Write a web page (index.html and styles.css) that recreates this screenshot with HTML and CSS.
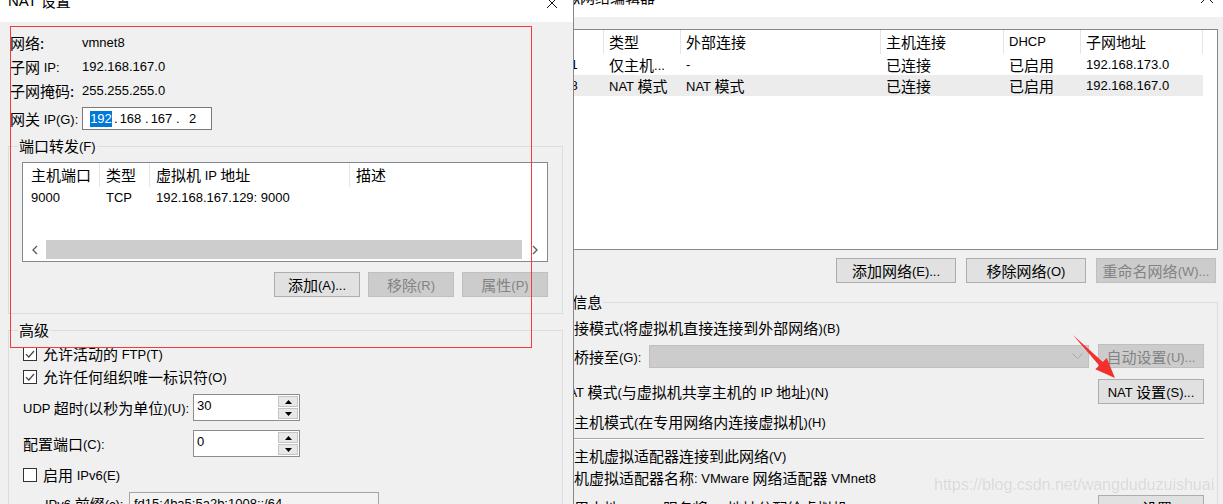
FILE: index.html
```html
<!DOCTYPE html>
<html lang="zh-CN">
<head>
<meta charset="utf-8">
<title>NAT 设置</title>
<link rel="stylesheet" href="styles.css">
</head>
<body>
<div class="desk">

  <!-- background window: virtual network editor -->
  <div class="win editor">
    <div class="titlebar tb-small">
      <span class="wtitle">虚拟网络编辑器</span>
      <svg class="wclose" width="14" height="14" viewBox="0 0 14 14"><path d="M1 1L13 13M13 1L1 13" stroke="#111" stroke-width="1" fill="none"/></svg>
    </div>
    <div class="ed-body">
      <div class="netlist">
        <div class="erow ehead">
          <div class="e1">名称</div><div class="e2">类型</div><div class="e3">外部连接</div><div class="e4">主机连接</div><div class="e5 en">DHCP</div><div class="e6">子网地址</div>
        </div>
        <div class="erow">
          <div class="e1 en">VMnet1</div><div class="e2">仅主机<span class="en">...</span></div><div class="e3 en">-</div><div class="e4">已连接</div><div class="e5">已启用</div><div class="e6 en">192.168.173.0</div>
        </div>
        <div class="erow cur">
          <div class="e1 en">VMnet8</div><div class="e2"><span class="en">NAT </span>模式</div><div class="e3"><span class="en">NAT </span>模式</div><div class="e4">已连接</div><div class="e5">已启用</div><div class="e6 en">192.168.167.0</div>
        </div>
      </div>

      <div class="ebtns">
        <button class="btn wide">添加网络<span class="en">(E)...</span></button>
        <button class="btn wide">移除网络<span class="en">(O)</span></button>
        <button class="btn wide off">重命名网络<span class="en">(W)...</span></button>
      </div>

      <div class="group info">
        <div class="gtitle"><span class="en">VMnet </span>信息</div>
        <div class="orow r-bridge"><span class="radio"></span><span>桥接模式<span class="en">(</span>将虚拟机直接连接到外部网络<span class="en">)(B)</span></span></div>
        <div class="orow r-to">
          <span class="lab">已桥接至<span class="en">(G):</span></span>
          <div class="combo"><svg width="11" height="6" viewBox="0 0 11 6"><path d="M0.5 0.5L5.5 5.5L10.5 0.5" stroke="#a8a8a8" fill="none"/></svg></div>
          <button class="btn side off">自动设置<span class="en">(U)...</span></button>
        </div>
        <div class="orow r-nat"><span class="radio on"></span><span><span class="en">NAT </span>模式<span class="en">(</span>与虚拟机共享主机的<span class="en"> IP </span>地址<span class="en">)(N)</span></span><button class="btn side"><span class="en">NAT </span>设置<span class="en">(S)...</span></button></div>
        <div class="orow r-host"><span class="radio"></span><span>仅主机模式<span class="en">(</span>在专用网络内连接虚拟机<span class="en">)(H)</span></span></div>
        <div class="hsep"></div>
        <div class="orow r-adp"><span class="check"><svg width="12" height="12" viewBox="0 0 12 12"><path d="M2 6.2L4.8 9L10 3" stroke="#333" stroke-width="1.3" fill="none"/></svg></span><span>将主机虚拟适配器连接到此网络<span class="en">(V)</span></span></div>
        <div class="orow r-name"><span>主机虚拟适配器名称<span class="en">: VMware </span>网络适配器<span class="en"> VMnet8</span></span></div>
        <div class="orow r-dhcp"><span class="check"><svg width="12" height="12" viewBox="0 0 12 12"><path d="M2 6.2L4.8 9L10 3" stroke="#333" stroke-width="1.3" fill="none"/></svg></span><span>使用本地<span class="en"> DHCP </span>服务将<span class="en"> IP </span>地址分配给虚拟机<span class="en">(D)</span></span><button class="btn side"><span class="en">DHCP </span>设置<span class="en">(P)...</span></button></div>
      </div>
    </div>
  </div>

  <!-- foreground dialog -->
  <div class="win nat">
    <div class="titlebar">
      <span class="wtitle"><span class="en">NAT </span>设置</span>
      <svg class="wclose" width="12" height="12" viewBox="0 0 12 12"><path d="M1 1L11 11M11 1L1 11" stroke="#111" stroke-width="1" fill="none"/></svg>
    </div>
    <div class="nat-body">
      <div class="kv"><span class="k">网络:</span><span class="en">vmnet8</span></div>
      <div class="kv"><span class="k">子网<span class="en"> IP:</span></span><span class="en">192.168.167.0</span></div>
      <div class="kv"><span class="k">子网掩码:</span><span class="en">255.255.255.0</span></div>
      <div class="kv gw">
        <span class="k">网关<span class="en"> IP(G):</span></span>
        <div class="ipbox en">
          <span class="oct first"><span class="sel">192</span></span><span class="dot">.</span><span class="oct">168</span><span class="dot">.</span><span class="oct">167</span><span class="dot">.</span><span class="oct">2</span>
        </div>
      </div>

      <div class="group ports">
        <div class="gtitle">端口转发<span class="en">(F)</span></div>
        <div class="plist">
          <div class="prow phead">
            <div class="p1">主机端口</div><div class="p2">类型</div><div class="p3">虚拟机<span class="en"> IP </span>地址</div><div class="p4">描述</div>
          </div>
          <div class="prow en">
            <div class="p1">9000</div><div class="p2">TCP</div><div class="p3">192.168.167.129: 9000</div><div class="p4"></div>
          </div>
          <div class="pfill"></div>
          <div class="hscroll">
            <div class="harrow la"><svg width="6" height="10" viewBox="0 0 6 10"><path d="M5 1L1 5L5 9" stroke="#606060" stroke-width="1.4" fill="none"/></svg></div>
            <div class="hthumb"></div>
            <div class="harrow ra"><svg width="6" height="10" viewBox="0 0 6 10"><path d="M1 1L5 5L1 9" stroke="#606060" stroke-width="1.4" fill="none"/></svg></div>
          </div>
        </div>
        <div class="pbtns">
          <button class="btn">添加<span class="en">(A)...</span></button>
          <button class="btn off">移除<span class="en">(R)</span></button>
          <button class="btn off">属性<span class="en">(P)</span></button>
        </div>
      </div>

      <div class="group adv">
        <div class="gtitle">高级</div>
        <div class="cbrow first"><span class="check"><svg width="12" height="12" viewBox="0 0 12 12"><path d="M2 6.2L4.8 9L10 3" stroke="#444" stroke-width="1.2" fill="none"/></svg></span><span>允许活动的<span class="en"> FTP(T)</span></span></div>
        <div class="cbrow"><span class="check"><svg width="12" height="12" viewBox="0 0 12 12"><path d="M2 6.2L4.8 9L10 3" stroke="#444" stroke-width="1.2" fill="none"/></svg></span><span>允许任何组织唯一标识符<span class="en">(O)</span></span></div>
        <div class="srow udp">
          <span class="k"><span class="en">UDP </span>超时<span class="en">(</span>以秒为单位<span class="en">)(U):</span></span>
          <div class="spin">
            <span class="sval en">30</span>
            <div class="sbtns">
              <div class="sb"><svg width="7" height="4" viewBox="0 0 7 4"><path d="M0 4L3.5 0L7 4Z"/></svg></div>
              <div class="sb"><svg width="7" height="4" viewBox="0 0 7 4"><path d="M0 0L3.5 4L7 0Z"/></svg></div>
            </div>
          </div>
        </div>
        <div class="srow port">
          <span class="k">配置端口<span class="en">(C):</span></span>
          <div class="spin">
            <span class="sval en">0</span>
            <div class="sbtns">
              <div class="sb"><svg width="7" height="4" viewBox="0 0 7 4"><path d="M0 4L3.5 0L7 4Z"/></svg></div>
              <div class="sb"><svg width="7" height="4" viewBox="0 0 7 4"><path d="M0 0L3.5 4L7 0Z"/></svg></div>
            </div>
          </div>
        </div>
        <div class="cbrow v6"><span class="check"></span><span>启用<span class="en"> IPv6(E)</span></span></div>
        <div class="prefix"><span class="k"><span class="en">IPv6 </span>前缀<span class="en">(c):</span></span><div class="ro en">fd15:4ba5:5a2b:1008::/64</div></div>
      </div>
    </div>
  </div>

  <!-- annotations drawn over the screenshot -->
  <div class="mark"></div>
  <svg class="arrow" width="70" height="70" viewBox="0 0 70 70">
    <path d="M13 15L42.8 42L46.7 38.1L55 58L35.3 49.3L39.2 45.5Z" fill="#f2302c"/>
  </svg>
  <div class="wm">https://blog.csdn.net/wangduduzuishuai</div>
</div>
</body>
</html>
```

FILE: styles.css
```css
* {
    box-sizing: border-box;
}

body {
    margin: 0;
    background: #f0f0f0;
    font-family: "Noto Sans CJK SC", "Liberation Sans", sans-serif;
    font-size: 15px;
    color: #000;
}

/* latin runs are drawn smaller than the CJK ones, as on the Windows dialog */
.en {
    font-family: "Liberation Sans", "Noto Sans CJK SC", sans-serif;
    font-size: 13px;
    line-height: 1;
    vertical-align: 1px;
}
.wtitle .en {
    font-size: 15px;
}

.desk {
    position: relative;
    width: 1223px;
    height: 504px;
    overflow: hidden;
}

/* windows */
.win {
    position: absolute;
    top: 0;
    height: 540px;
    background: #f0f0f0;
}
.nat {
    left: 0;
    width: 574px;
    border-right: 1px solid #888;
    z-index: 2;
}
.editor {
    left: 517px;
    width: 713px;
    z-index: 1;
}

.titlebar {
    display: flex;
    align-items: flex-start;
    height: 22px;
    background: #fff;
}
.tb-small {
    height: 17px;
}
.wtitle {
    line-height: 18px;
    white-space: nowrap;
}
.nat .wtitle {
    margin: -8px 0 0 8px;
}
.editor .wtitle {
    margin: -12px 0 0 33px;
}
.wclose {
    flex: none;
    margin-left: auto;
}
.nat .wclose {
    margin-top: -3px;
    margin-right: 15px;
}
.editor .wclose {
    margin-top: -10px;
    margin-right: 16px;
}

/* common controls */
.btn {
    height: 25px;
    padding: 0;
    border: 1px solid #adadad;
    background: #e1e1e1;
    font: inherit;
    color: #000;
    white-space: nowrap;
}
.btn.off {
    background: #cccccc;
    border-color: #bfbfbf;
    color: #838383;
}
.group {
    border: 1px solid #dcdcdc;
}
.gtitle {
    width: fit-content;
    margin: -10px 0 0 -4px;
    padding: 0 1px;
    line-height: 18px;
    background: #f0f0f0;
    white-space: nowrap;
}
.check {
    display: flex;
    flex: none;
    width: 14px;
    height: 14px;
    margin-right: 6px;
    border: 1px solid #333;
    background: #fff;
}
.radio {
    flex: none;
    width: 14px;
    height: 14px;
    margin-right: 5px;
    border: 1px solid #333;
    border-radius: 50%;
    background: #fff;
}
.radio.on {
    background: radial-gradient(circle, #333 3px, #fff 3.5px);
}

/* NAT dialog */
.nat-body {
    padding: 8px 10px 0 8px;
}
.kv {
    display: flex;
    align-items: center;
    height: 24px;
    padding-left: 2px;
    white-space: nowrap;
}
.kv .k {
    flex: none;
    width: 72px;
}
.kv.gw {
    height: 23px;
    margin-top: 5px;
}
.ipbox {
    display: flex;
    align-items: center;
    width: 130px;
    height: 23px;
    padding-left: 6px;
    border: 1px solid #7a7a7a;
    background: #fff;
}
.oct {
    width: 27px;
    text-align: center;
}
.oct.first {
    width: 24px;
}
.dot {
    width: 4px;
    padding-left: 1px;
}
.sel {
    display: inline-block;
    line-height: 16px;
    background: #0078d7;
    color: #fff;
}

.ports {
    margin-top: 16px;
    padding: 0 14px 16px 13px;
}
.plist {
    display: flex;
    flex-direction: column;
    height: 100px;
    margin-top: 7px;
    border: 1px solid #828790;
    background: #fff;
}
.prow {
    display: flex;
    height: 21px;
    line-height: 21px;
    white-space: nowrap;
}
.phead {
    height: 24px;
    line-height: 24px;
}
.prow > div {
    padding-left: 6px;
    line-height: inherit;
}
.phead > div {
    border-right: 1px solid #e5e5e5;
}
.prow > .p1 {
    width: 77px;
    padding-left: 8px;
}
.p2 {
    width: 50px;
}
.p3 {
    width: 200px;
}
.phead > .p4 {
    border-right: none;
}
.pfill {
    flex: 1;
}
.hscroll {
    display: flex;
    height: 19px;
    margin-bottom: 2px;
}
.harrow {
    display: flex;
    align-items: center;
    justify-content: center;
}
.la {
    width: 23px;
}
.ra {
    width: 25px;
}
.hthumb {
    flex: 1;
    background: #cdcdcd;
}
.pbtns {
    display: flex;
    justify-content: flex-end;
    gap: 8px;
    margin-top: 10px;
}
.pbtns .btn {
    width: 86px;
}

.adv {
    margin-top: 16px;
    padding: 0 14px 30px 13px;
}
.cbrow {
    display: flex;
    align-items: center;
    height: 23px;
    padding-left: 1px;
    white-space: nowrap;
}
.cbrow.first {
    margin-top: 3px;
}
.cbrow.v6 {
    margin-top: 6px;
}
.srow {
    display: flex;
    align-items: center;
    padding-left: 1px;
    white-space: nowrap;
}
.srow.udp {
    margin-top: 6px;
}
.srow.port {
    margin-top: 9px;
}
.srow .k {
    flex: none;
    width: 170px;
}
.spin {
    display: flex;
    width: 107px;
    height: 27px;
    border: 1px solid #8c8c8c;
    background: #fff;
}
.sval {
    flex: 1;
    padding: 2px 0 0 3px;
    line-height: 18px;
}
.sbtns {
    display: flex;
    flex-direction: column;
    gap: 1px;
    width: 20px;
    margin: 1px 1px 1px 0;
}
.sb {
    display: flex;
    flex: 1;
    align-items: center;
    justify-content: center;
    border: 1px solid #c4c4c4;
    background: #e8e8e8;
}
.prefix {
    display: flex;
    align-items: center;
    margin-top: 6px;
    padding-left: 23px;
    white-space: nowrap;
}
.prefix .k {
    flex: none;
    width: 84px;
}
.ro {
    width: 250px;
    height: 23px;
    padding-left: 4px;
    line-height: 21px;
    border: 1px solid #a5a5a5;
    background: #f3f3f3;
}

/* virtual network editor */
.ed-body {
    padding: 12px 12px 0 10px;
}
.netlist {
    height: 221px;
    border: 1px solid #828790;
    background: #fff;
}
.erow {
    display: flex;
    width: 675px;
    height: 21px;
    line-height: 21px;
    white-space: nowrap;
}
.erow > div {
    overflow: hidden;
    padding-left: 5px;
    line-height: inherit;
}
.ehead {
    height: 24px;
    line-height: 24px;
}
.ehead > div {
    border-right: 1px solid #e5e5e5;
}
.erow.cur {
    background: #ececec;
}
.e1 { width: 76px; }
.e2 { width: 77px; }
.e3 { width: 200px; }
.e4 { width: 123px; }
.e5 { width: 77px; }
.e6 { width: 122px; }

.ebtns {
    display: flex;
    justify-content: flex-end;
    gap: 10px;
    margin-top: 8px;
    padding-right: 2px;
}
.btn.wide {
    width: 120px;
}

.info {
    margin-top: 19px;
    padding: 0 13px 20px 12px;
}
.info .gtitle {
    margin-left: -10px;
}
.orow {
    display: flex;
    align-items: center;
    height: 23px;
    white-space: nowrap;
}
.orow .btn.side {
    width: 106px;
    margin-left: auto;
}
.r-bridge {
    margin-top: 5px;
}
.r-to {
    height: 24px;
    margin-top: 5px;
    padding-left: 19px;
}
.r-to .lab {
    flex: none;
    width: 90px;
}
.combo {
    display: flex;
    flex: 1;
    align-items: center;
    justify-content: flex-end;
    height: 23px;
    margin-right: 9px;
    padding-right: 5px;
    border: 1px solid #bfbfbf;
    background: #cccccc;
}
.r-to .btn.side {
    height: 24px;
}
.r-nat {
    height: 25px;
    margin-top: 11px;
}
.r-host {
    height: 22px;
    margin-top: 6px;
}
.hsep {
    height: 2px;
    margin-top: 6px;
    border-top: 1px solid #a8a8a8;
    border-bottom: 1px solid #fff;
}
.r-adp {
    height: 22px;
    margin-top: 4px;
}
.r-adp .check,
.r-dhcp .check {
    margin-right: 5px;
}
.r-name {
    height: 23px;
    padding-left: 19px;
}
.r-dhcp {
    height: 25px;
    margin-top: 6px;
}

/* annotations */
.mark {
    position: absolute;
    left: 10px;
    top: 26px;
    width: 522px;
    height: 322px;
    border: 1px solid #f33b3b;
    z-index: 3;
}
.arrow {
    position: absolute;
    left: 1060px;
    top: 320px;
    z-index: 3;
}
.wm {
    position: absolute;
    left: 934px;
    top: 476px;
    font-family: "Liberation Sans", sans-serif;
    font-size: 16px;
    line-height: 18px;
    color: #d9d9d9;
    text-shadow: 0 0 1px #fff;
    z-index: 3;
}
```
